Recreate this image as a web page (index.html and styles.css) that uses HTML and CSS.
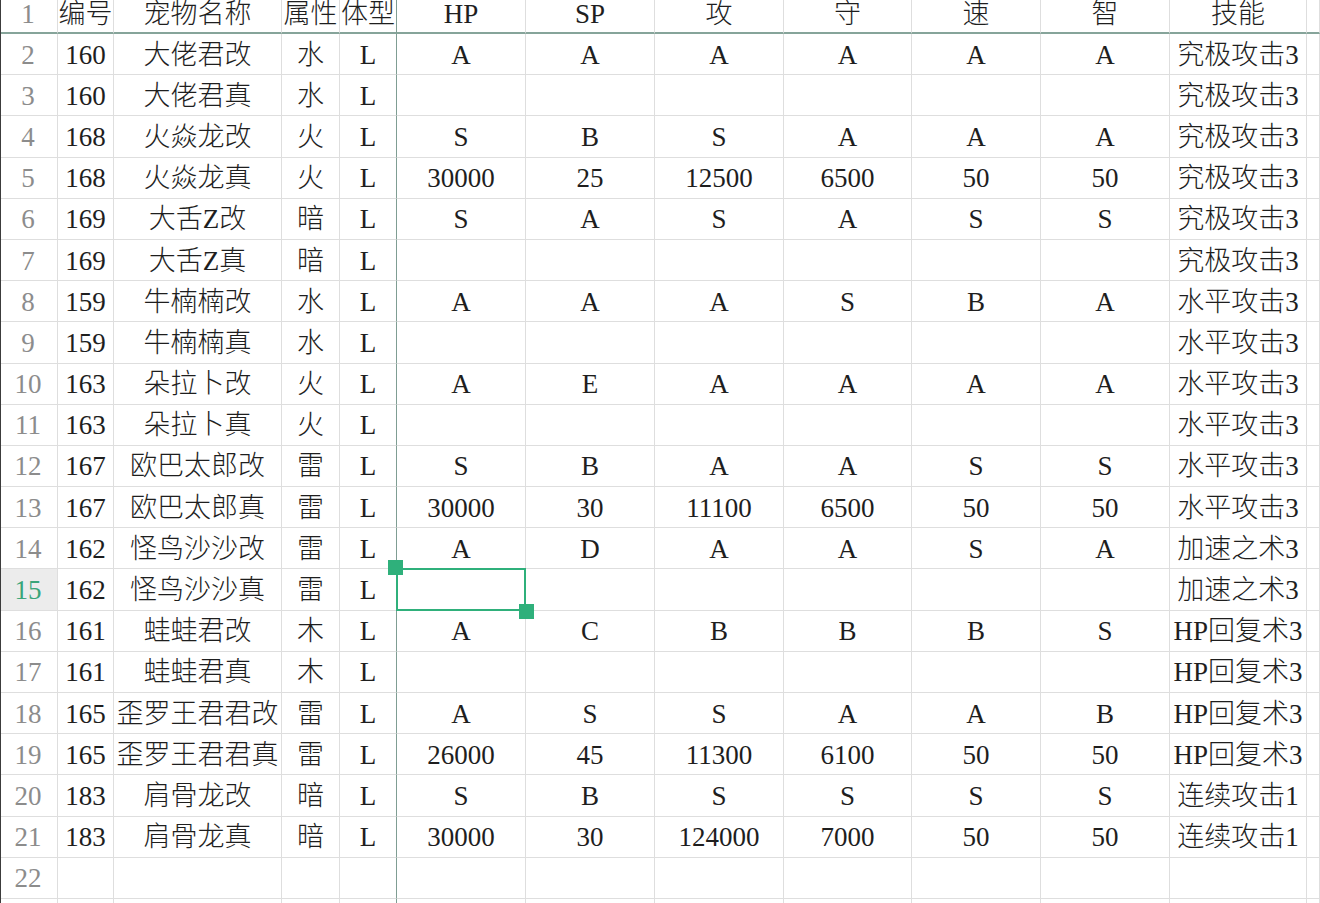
FILE: index.html
```html
<!DOCTYPE html>
<html lang="zh-CN">
<head>
<meta charset="utf-8">
<title>Sheet</title>
<link rel="stylesheet" href="styles.css">
</head>
<body>
<div class="sheet">
  <div class="row head">
    <div class="c rn">1</div><div class="c">编号</div><div class="c">宠物名称</div><div class="c">属性</div><div class="c frz">体型</div><div class="c">HP</div><div class="c">SP</div><div class="c">攻</div><div class="c">守</div><div class="c">速</div><div class="c">智</div><div class="c">技能</div><div class="c"></div>
  </div>
  <div class="row">
    <div class="c rn">2</div><div class="c">160</div><div class="c">大佬君改</div><div class="c">水</div><div class="c frz">L</div><div class="c">A</div><div class="c">A</div><div class="c">A</div><div class="c">A</div><div class="c">A</div><div class="c">A</div><div class="c">究极攻击3</div><div class="c"></div>
  </div>
  <div class="row">
    <div class="c rn">3</div><div class="c">160</div><div class="c">大佬君真</div><div class="c">水</div><div class="c frz">L</div><div class="c"></div><div class="c"></div><div class="c"></div><div class="c"></div><div class="c"></div><div class="c"></div><div class="c">究极攻击3</div><div class="c"></div>
  </div>
  <div class="row">
    <div class="c rn">4</div><div class="c">168</div><div class="c">火焱龙改</div><div class="c">火</div><div class="c frz">L</div><div class="c">S</div><div class="c">B</div><div class="c">S</div><div class="c">A</div><div class="c">A</div><div class="c">A</div><div class="c">究极攻击3</div><div class="c"></div>
  </div>
  <div class="row">
    <div class="c rn">5</div><div class="c">168</div><div class="c">火焱龙真</div><div class="c">火</div><div class="c frz">L</div><div class="c">30000</div><div class="c">25</div><div class="c">12500</div><div class="c">6500</div><div class="c">50</div><div class="c">50</div><div class="c">究极攻击3</div><div class="c"></div>
  </div>
  <div class="row">
    <div class="c rn">6</div><div class="c">169</div><div class="c">大舌Z改</div><div class="c">暗</div><div class="c frz">L</div><div class="c">S</div><div class="c">A</div><div class="c">S</div><div class="c">A</div><div class="c">S</div><div class="c">S</div><div class="c">究极攻击3</div><div class="c"></div>
  </div>
  <div class="row">
    <div class="c rn">7</div><div class="c">169</div><div class="c">大舌Z真</div><div class="c">暗</div><div class="c frz">L</div><div class="c"></div><div class="c"></div><div class="c"></div><div class="c"></div><div class="c"></div><div class="c"></div><div class="c">究极攻击3</div><div class="c"></div>
  </div>
  <div class="row">
    <div class="c rn">8</div><div class="c">159</div><div class="c">牛楠楠改</div><div class="c">水</div><div class="c frz">L</div><div class="c">A</div><div class="c">A</div><div class="c">A</div><div class="c">S</div><div class="c">B</div><div class="c">A</div><div class="c">水平攻击3</div><div class="c"></div>
  </div>
  <div class="row">
    <div class="c rn">9</div><div class="c">159</div><div class="c">牛楠楠真</div><div class="c">水</div><div class="c frz">L</div><div class="c"></div><div class="c"></div><div class="c"></div><div class="c"></div><div class="c"></div><div class="c"></div><div class="c">水平攻击3</div><div class="c"></div>
  </div>
  <div class="row">
    <div class="c rn">10</div><div class="c">163</div><div class="c">朵拉卜改</div><div class="c">火</div><div class="c frz">L</div><div class="c">A</div><div class="c">E</div><div class="c">A</div><div class="c">A</div><div class="c">A</div><div class="c">A</div><div class="c">水平攻击3</div><div class="c"></div>
  </div>
  <div class="row">
    <div class="c rn">11</div><div class="c">163</div><div class="c">朵拉卜真</div><div class="c">火</div><div class="c frz">L</div><div class="c"></div><div class="c"></div><div class="c"></div><div class="c"></div><div class="c"></div><div class="c"></div><div class="c">水平攻击3</div><div class="c"></div>
  </div>
  <div class="row">
    <div class="c rn">12</div><div class="c">167</div><div class="c">欧巴太郎改</div><div class="c">雷</div><div class="c frz">L</div><div class="c">S</div><div class="c">B</div><div class="c">A</div><div class="c">A</div><div class="c">S</div><div class="c">S</div><div class="c">水平攻击3</div><div class="c"></div>
  </div>
  <div class="row">
    <div class="c rn">13</div><div class="c">167</div><div class="c">欧巴太郎真</div><div class="c">雷</div><div class="c frz">L</div><div class="c">30000</div><div class="c">30</div><div class="c">11100</div><div class="c">6500</div><div class="c">50</div><div class="c">50</div><div class="c">水平攻击3</div><div class="c"></div>
  </div>
  <div class="row">
    <div class="c rn">14</div><div class="c">162</div><div class="c">怪鸟沙沙改</div><div class="c">雷</div><div class="c frz">L</div><div class="c">A</div><div class="c">D</div><div class="c">A</div><div class="c">A</div><div class="c">S</div><div class="c">A</div><div class="c">加速之术3</div><div class="c"></div>
  </div>
  <div class="row">
    <div class="c rn active">15</div><div class="c">162</div><div class="c">怪鸟沙沙真</div><div class="c">雷</div><div class="c frz">L</div><div class="c sel"><span class="handle tl"></span><span class="handle br"></span></div><div class="c"></div><div class="c"></div><div class="c"></div><div class="c"></div><div class="c"></div><div class="c">加速之术3</div><div class="c"></div>
  </div>
  <div class="row">
    <div class="c rn">16</div><div class="c">161</div><div class="c">蛙蛙君改</div><div class="c">木</div><div class="c frz">L</div><div class="c">A</div><div class="c">C</div><div class="c">B</div><div class="c">B</div><div class="c">B</div><div class="c">S</div><div class="c">HP回复术3</div><div class="c"></div>
  </div>
  <div class="row">
    <div class="c rn">17</div><div class="c">161</div><div class="c">蛙蛙君真</div><div class="c">木</div><div class="c frz">L</div><div class="c"></div><div class="c"></div><div class="c"></div><div class="c"></div><div class="c"></div><div class="c"></div><div class="c">HP回复术3</div><div class="c"></div>
  </div>
  <div class="row">
    <div class="c rn">18</div><div class="c">165</div><div class="c">歪罗王君君改</div><div class="c">雷</div><div class="c frz">L</div><div class="c">A</div><div class="c">S</div><div class="c">S</div><div class="c">A</div><div class="c">A</div><div class="c">B</div><div class="c">HP回复术3</div><div class="c"></div>
  </div>
  <div class="row">
    <div class="c rn">19</div><div class="c">165</div><div class="c">歪罗王君君真</div><div class="c">雷</div><div class="c frz">L</div><div class="c">26000</div><div class="c">45</div><div class="c">11300</div><div class="c">6100</div><div class="c">50</div><div class="c">50</div><div class="c">HP回复术3</div><div class="c"></div>
  </div>
  <div class="row">
    <div class="c rn">20</div><div class="c">183</div><div class="c">肩骨龙改</div><div class="c">暗</div><div class="c frz">L</div><div class="c">S</div><div class="c">B</div><div class="c">S</div><div class="c">S</div><div class="c">S</div><div class="c">S</div><div class="c">连续攻击1</div><div class="c"></div>
  </div>
  <div class="row">
    <div class="c rn">21</div><div class="c">183</div><div class="c">肩骨龙真</div><div class="c">暗</div><div class="c frz">L</div><div class="c">30000</div><div class="c">30</div><div class="c">124000</div><div class="c">7000</div><div class="c">50</div><div class="c">50</div><div class="c">连续攻击1</div><div class="c"></div>
  </div>
  <div class="row">
    <div class="c rn">22</div><div class="c"></div><div class="c"></div><div class="c"></div><div class="c frz"></div><div class="c"></div><div class="c"></div><div class="c"></div><div class="c"></div><div class="c"></div><div class="c"></div><div class="c"></div><div class="c"></div>
  </div>
  <div class="row">
    <div class="c rn"></div><div class="c"></div><div class="c"></div><div class="c"></div><div class="c frz"></div><div class="c"></div><div class="c"></div><div class="c"></div><div class="c"></div><div class="c"></div><div class="c"></div><div class="c"></div><div class="c"></div>
  </div>
</div>
</body>
</html>
```
FILE: styles.css
```css
html, body {
  margin: 0;
  padding: 0;
  background: #ffffff;
  overflow: hidden;
}

.sheet {
  width: 1320px;
  height: 903px;
  overflow: hidden;
  border-left: 1px solid #3c3c3c;
  box-sizing: border-box;
  font-family: "Liberation Serif", "Noto Sans CJK SC", serif;
  font-size: 27px;
  font-weight: 300;
  color: #1e1e1e;
}

.row {
  display: grid;
  grid-template-columns: 57px 56px 168px 58px 57px 129px 129px 129px 128px 129px 129px 137px 1fr;
  height: 41.2px;
}

.row.head {
  height: 34px;
}

.c {
  box-sizing: border-box;
  border-right: 1px solid #dedede;
  border-bottom: 1px solid #dedede;
  display: flex;
  align-items: center;
  justify-content: center;
  white-space: nowrap;
  overflow: visible;
  line-height: 1;
  padding-top: 2px;
}

.head .c {
  border-bottom: 2px solid #86a49a;
  padding-top: 0;
  padding-bottom: 3px;
}

.c.frz {
  border-right: 1.5px solid #7f9d93;
}

.c.rn {
  color: #8c8c8c;
  padding-right: 2px;
}

.c.rn.active {
  background: #ececec;
  color: #3aa57a;
}

.c.sel {
  position: relative;
  z-index: 1;
}

.c.sel::before {
  content: "";
  position: absolute;
  left: -1px;
  top: -1px;
  right: -1px;
  bottom: -1px;
  border: 2px solid #2fb07b;
}

.handle {
  position: absolute;
  width: 15px;
  height: 15px;
  background: #2fb07b;
}

.handle.tl {
  left: -9px;
  top: -9px;
}

.handle.br {
  right: -9px;
  bottom: -9px;
}
```
